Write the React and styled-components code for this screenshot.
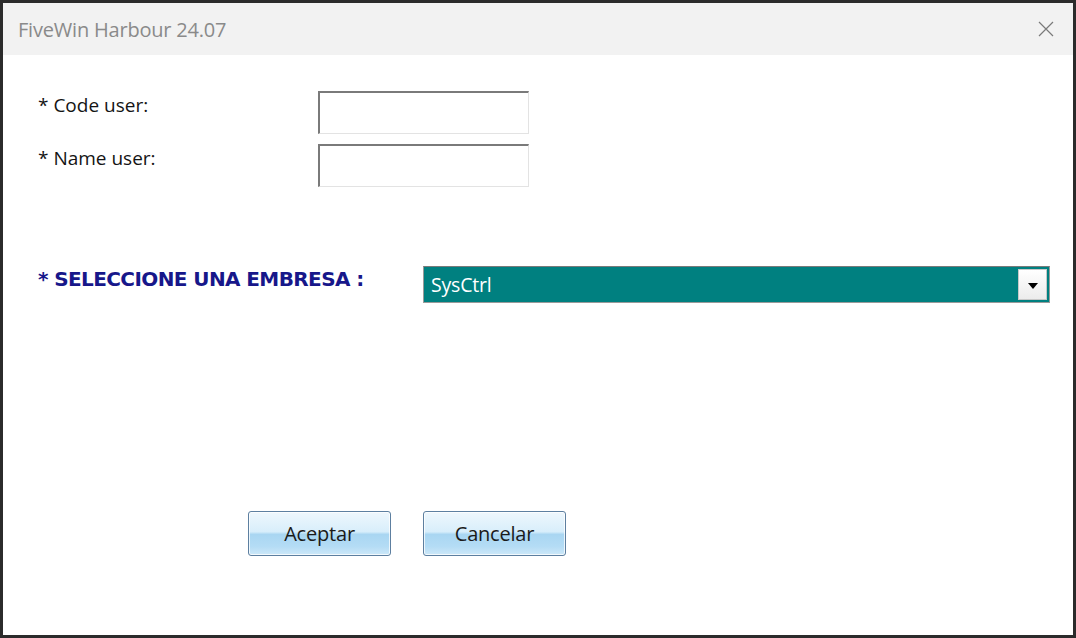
import React from "react";
import styled, { createGlobalStyle } from "styled-components";

const Global = createGlobalStyle`
  html, body { margin: 0; padding: 0; background: #2b2b2b; }
  body { width: 1076px; height: 638px; overflow: hidden; }
`;

const Screen = styled.div`
  width: 1076px;
  height: 638px;
  box-sizing: border-box;
  padding: 3px;
  background: #2b2b2b;
  display: flex;
`;

const Window = styled.div`
  flex: 1;
  display: flex;
  flex-direction: column;
  background: #ffffff;
`;

const TitleBar = styled.div`
  height: 52px;
  background: #f2f2f2;
  display: flex;
  align-items: center;
  justify-content: space-between;
  padding: 0 17px 0 15px;
  font-family: "Open Sans", "Noto Sans", sans-serif;
  font-size: 20px;
  color: #8a8a8a;
`;

const Title = styled.span`
  letter-spacing: -0.2px;
`;

const CloseBtn = styled.div`
  width: 20px;
  height: 20px;
  display: flex;
  align-items: center;
  justify-content: center;
`;

const Body = styled.div`
  flex: 1;
  display: flex;
  flex-direction: column;
  padding: 36px 0 0 35px;
`;

const FieldGrid = styled.div`
  display: grid;
  grid-template-columns: 280px 211px;
  row-gap: 10px;
`;

const Label = styled.div`
  font-family: "Open Sans", "Noto Sans", sans-serif;
  font-size: 19px;
  line-height: 24px;
  color: #141414;
  padding-top: 2px;
  letter-spacing: 0;
`;

const TextBox = styled.div`
  height: 43px;
  box-sizing: border-box;
  border-top: 2px solid #7a7a7a;
  border-left: 2px solid #7a7a7a;
  border-right: 1px solid #e3e3e3;
  border-bottom: 1px solid #e3e3e3;
  background: #fff;
`;

const ComboRow = styled.div`
  display: flex;
  align-items: flex-start;
  margin-top: 79px;
  padding-right: 23px;
`;

const BoldLabel = styled.div`
  width: 385px;
  font-family: Tahoma, "DejaVu Sans", sans-serif;
  font-weight: bold;
  font-size: 20px;
  line-height: 24px;
  color: #17178a;
  padding-top: 1px;
  letter-spacing: -0.6px;
`;

const Combo = styled.div`
  flex: 1;
  height: 37px;
  box-sizing: border-box;
  border: 1px solid #9a9a9a;
  border-top-color: #7a7a7a;
  background: #008080;
  display: flex;
  align-items: center;
  padding: 0 2px 0 7px;
`;

const ComboText = styled.span`
  flex: 1;
  font-family: "Open Sans", "Noto Sans", sans-serif;
  font-size: 19.5px;
  color: #ffffff;
  letter-spacing: -0.2px;
`;

const DropBtn = styled.div`
  width: 29px;
  height: 31px;
  box-sizing: border-box;
  background: linear-gradient(#ffffff, #ececec);
  border: 1px solid #c8c8c8;
  display: flex;
  align-items: center;
  justify-content: center;
`;

const Arrow = styled.div`
  width: 0;
  height: 0;
  border-left: 5px solid transparent;
  border-right: 5px solid transparent;
  border-top: 6px solid #000;
  margin-top: 2px;
`;

const ButtonRow = styled.div`
  display: flex;
  gap: 32px;
  margin-top: 208px;
  margin-left: 210px;
`;

const Button = styled.div`
  width: 143px;
  height: 45px;
  box-sizing: border-box;
  border: 1px solid #5d7fa0;
  border-radius: 3px;
  box-shadow: inset 0 0 0 1px rgba(255,255,255,0.75);
  background: linear-gradient(
    #eef7fd 0%,
    #d8eefb 46%,
    #a9d6f2 52%,
    #b4dcf5 80%,
    #cde8f8 100%
  );
  display: flex;
  align-items: center;
  justify-content: center;
  font-family: "Open Sans", "Noto Sans", sans-serif;
  font-size: 20px;
  color: #1a1a1a;
  letter-spacing: -0.2px;
`;

export default function App() {
  return (
    <>
      <Global />
      <Screen>
        <Window>
          <TitleBar>
            <Title>FiveWin Harbour 24.07</Title>
            <CloseBtn>
              <svg width="16" height="16" viewBox="0 0 16 16">
                <path d="M1 1 L15 15 M15 1 L1 15" stroke="#7a7a7a" strokeWidth="1.2" fill="none" />
              </svg>
            </CloseBtn>
          </TitleBar>
          <Body>
            <FieldGrid>
              <Label>* Code user:</Label>
              <TextBox />
              <Label>* Name user:</Label>
              <TextBox />
            </FieldGrid>
            <ComboRow>
              <BoldLabel>* SELECCIONE UNA EMBRESA :</BoldLabel>
              <Combo>
                <ComboText>SysCtrl</ComboText>
                <DropBtn><Arrow /></DropBtn>
              </Combo>
            </ComboRow>
            <ButtonRow>
              <Button>Aceptar</Button>
              <Button>Cancelar</Button>
            </ButtonRow>
          </Body>
        </Window>
      </Screen>
    </>
  );
}
